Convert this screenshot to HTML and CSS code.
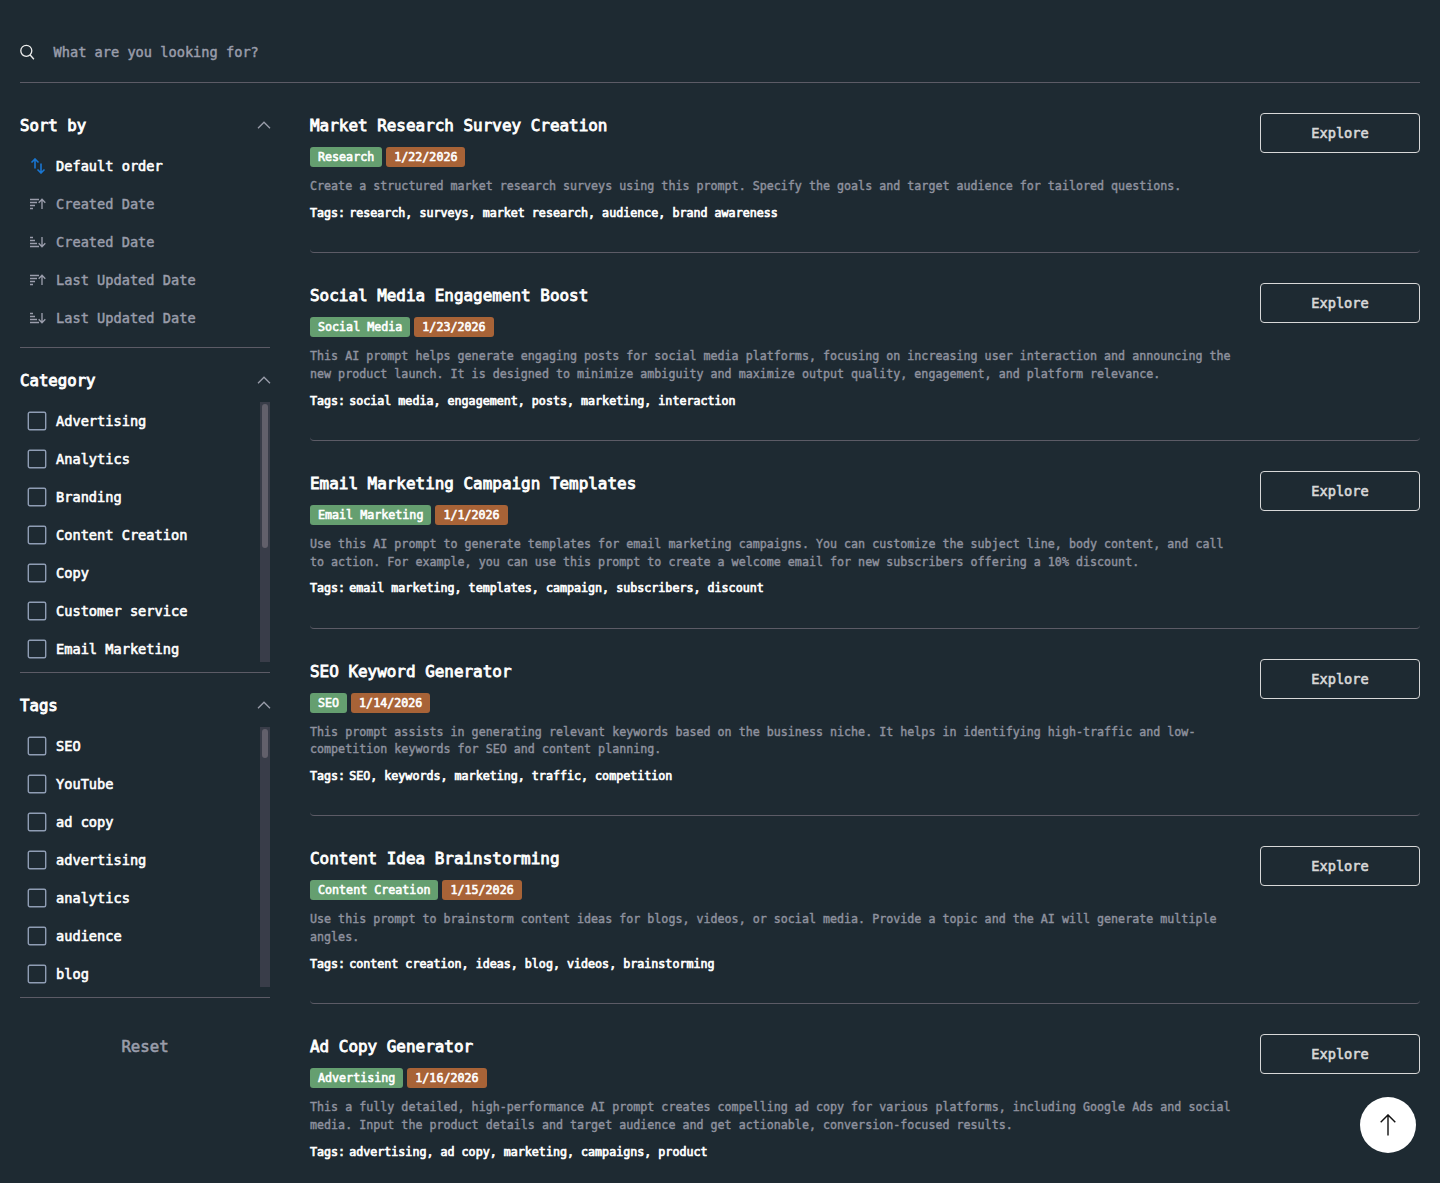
FILE: index.html
```html
<!DOCTYPE html>
<html lang="en">
<head>
<meta charset="utf-8">
<title>Prompts</title>
<link rel="stylesheet" href="styles.css">
</head>
<body>
<svg class="defs" width="0" height="0">
  <symbol id="chev" viewBox="0 0 14 8"><path d="M1 7.2 7 1.2l6 6"/></symbol>
  <symbol id="asc" viewBox="0 0 18 12"><path d="M.5 1.5h9M.5 4.500h7M.5 7.500h5M.5 10.500h3M12.500 11V1.300M9.200 4.700l3.300-3.500 3.300 3.500"/></symbol>
  <symbol id="desc" viewBox="0 0 18 12"><path d="M.5 1.500h3M.5 4.500h5M.5 7.500h7M.5 10.500h9M12.500 1v9.700M9.200 7.300l3.300 3.500 3.300-3.500"/></symbol>
</svg>
<header class="search">
  <svg class="search-icon" viewBox="0 0 16 16"><circle cx="6.300" cy="6.800" r="5.500"/><path d="m10.200 11 3.700 4.200"/></svg>
  <span class="placeholder">What are you looking for?</span>
</header>
<div class="layout">
  <aside class="sidebar">
    <section class="group first">
      <h2 class="head">Sort by<svg class="chev"><use href="#chev"/></svg></h2>
      <ul class="list">
        <li class="row active"><svg class="order" viewBox="0 0 16 16"><path d="M4.500 10.500V1.300M1 4.500l3.500-3.500L8 4.500M10.500 5.500v9M7 11.500l3.500 3.500L14 11.500"/></svg>Default order</li>
        <li class="row muted"><svg class="sort"><use href="#asc"/></svg>Created Date</li>
        <li class="row muted"><svg class="sort"><use href="#desc"/></svg>Created Date</li>
        <li class="row muted"><svg class="sort"><use href="#asc"/></svg>Last Updated Date</li>
        <li class="row muted"><svg class="sort"><use href="#desc"/></svg>Last Updated Date</li>
      </ul>
    </section>
    <section class="group">
      <h2 class="head">Category<svg class="chev"><use href="#chev"/></svg></h2>
      <div class="scroller">
        <ul class="list">
          <li class="row"><svg class="box" viewBox="0 0 20 20"><rect x="1.300" y="1.300" width="17.400" height="17.400" rx="1.500"/></svg>Advertising</li>
          <li class="row"><svg class="box" viewBox="0 0 20 20"><rect x="1.300" y="1.300" width="17.400" height="17.400" rx="1.500"/></svg>Analytics</li>
          <li class="row"><svg class="box" viewBox="0 0 20 20"><rect x="1.300" y="1.300" width="17.400" height="17.400" rx="1.500"/></svg>Branding</li>
          <li class="row"><svg class="box" viewBox="0 0 20 20"><rect x="1.300" y="1.300" width="17.400" height="17.400" rx="1.500"/></svg>Content Creation</li>
          <li class="row"><svg class="box" viewBox="0 0 20 20"><rect x="1.300" y="1.300" width="17.400" height="17.400" rx="1.500"/></svg>Copy</li>
          <li class="row"><svg class="box" viewBox="0 0 20 20"><rect x="1.300" y="1.300" width="17.400" height="17.400" rx="1.500"/></svg>Customer service</li>
          <li class="row"><svg class="box" viewBox="0 0 20 20"><rect x="1.300" y="1.300" width="17.400" height="17.400" rx="1.500"/></svg>Email Marketing</li>
        </ul>
        <div class="track"><div class="thumb long"></div></div>
      </div>
    </section>
    <section class="group">
      <h2 class="head">Tags<svg class="chev"><use href="#chev"/></svg></h2>
      <div class="scroller">
        <ul class="list">
          <li class="row"><svg class="box" viewBox="0 0 20 20"><rect x="1.300" y="1.300" width="17.400" height="17.400" rx="1.500"/></svg>SEO</li>
          <li class="row"><svg class="box" viewBox="0 0 20 20"><rect x="1.300" y="1.300" width="17.400" height="17.400" rx="1.500"/></svg>YouTube</li>
          <li class="row"><svg class="box" viewBox="0 0 20 20"><rect x="1.300" y="1.300" width="17.400" height="17.400" rx="1.500"/></svg>ad copy</li>
          <li class="row"><svg class="box" viewBox="0 0 20 20"><rect x="1.300" y="1.300" width="17.400" height="17.400" rx="1.500"/></svg>advertising</li>
          <li class="row"><svg class="box" viewBox="0 0 20 20"><rect x="1.300" y="1.300" width="17.400" height="17.400" rx="1.500"/></svg>analytics</li>
          <li class="row"><svg class="box" viewBox="0 0 20 20"><rect x="1.300" y="1.300" width="17.400" height="17.400" rx="1.500"/></svg>audience</li>
          <li class="row"><svg class="box" viewBox="0 0 20 20"><rect x="1.300" y="1.300" width="17.400" height="17.400" rx="1.500"/></svg>blog</li>
        </ul>
        <div class="track"><div class="thumb short"></div></div>
      </div>
    </section>
    <div class="reset">Reset</div>
  </aside>
  <main class="results">
    <article class="item">
      <div class="info">
        <h3 class="title">Market Research Survey Creation</h3>
        <div class="chips"><span class="chip">Research</span><span class="chip date">1/22/2026</span></div>
        <p class="text">Create a structured market research surveys using this prompt. Specify the goals and target audience for tailored questions.</p>
        <p class="tags"><span class="label">Tags:</span>research, surveys, market research, audience, brand awareness</p>
      </div>
      <a class="explore">Explore</a>
    </article>
    <article class="item">
      <div class="info">
        <h3 class="title">Social Media Engagement Boost</h3>
        <div class="chips"><span class="chip">Social Media</span><span class="chip date">1/23/2026</span></div>
        <p class="text">This AI prompt helps generate engaging posts for social media platforms, focusing on increasing user interaction and announcing the<br>new product launch. It is designed to minimize ambiguity and maximize output quality, engagement, and platform relevance.</p>
        <p class="tags"><span class="label">Tags:</span>social media, engagement, posts, marketing, interaction</p>
      </div>
      <a class="explore">Explore</a>
    </article>
    <article class="item">
      <div class="info">
        <h3 class="title">Email Marketing Campaign Templates</h3>
        <div class="chips"><span class="chip">Email Marketing</span><span class="chip date">1/1/2026</span></div>
        <p class="text">Use this AI prompt to generate templates for email marketing campaigns. You can customize the subject line, body content, and call<br>to action. For example, you can use this prompt to create a welcome email for new subscribers offering a 10% discount.</p>
        <p class="tags"><span class="label">Tags:</span>email marketing, templates, campaign, subscribers, discount</p>
      </div>
      <a class="explore">Explore</a>
    </article>
    <article class="item">
      <div class="info">
        <h3 class="title">SEO Keyword Generator</h3>
        <div class="chips"><span class="chip">SEO</span><span class="chip date">1/14/2026</span></div>
        <p class="text">This prompt assists in generating relevant keywords based on the business niche. It helps in identifying high-traffic and low-<br>competition keywords for SEO and content planning.</p>
        <p class="tags"><span class="label">Tags:</span>SEO, keywords, marketing, traffic, competition</p>
      </div>
      <a class="explore">Explore</a>
    </article>
    <article class="item">
      <div class="info">
        <h3 class="title">Content Idea Brainstorming</h3>
        <div class="chips"><span class="chip">Content Creation</span><span class="chip date">1/15/2026</span></div>
        <p class="text">Use this prompt to brainstorm content ideas for blogs, videos, or social media. Provide a topic and the AI will generate multiple<br>angles.</p>
        <p class="tags"><span class="label">Tags:</span>content creation, ideas, blog, videos, brainstorming</p>
      </div>
      <a class="explore">Explore</a>
    </article>
    <article class="item">
      <div class="info">
        <h3 class="title">Ad Copy Generator</h3>
        <div class="chips"><span class="chip">Advertising</span><span class="chip date">1/16/2026</span></div>
        <p class="text">This a fully detailed, high-performance AI prompt creates compelling ad copy for various platforms, including Google Ads and social<br>media. Input the product details and target audience and get actionable, conversion-focused results.</p>
        <p class="tags"><span class="label">Tags:</span>advertising, ad copy, marketing, campaigns, product</p>
      </div>
      <a class="explore">Explore</a>
    </article>
  </main>
</div>
<button class="top" aria-label="Back to top"><svg class="arrow" viewBox="0 0 16 22"><path d="M8 21.500V1M.7 8.200 8 .9l7.300 7.300"/></svg></button>
</body>
</html>
```
FILE: styles.css
```css
* { box-sizing: border-box; margin: 0; padding: 0; }
body {
  height: 1183px;
  overflow: hidden;
  padding: 20px 20px 0;
  background: #1e2a32;
  color: #fff;
  font-family: "DejaVu Sans Mono", monospace;
  font-size: 13.65px;
  -webkit-text-stroke: 0.6px currentColor;
}
svg { fill: none; stroke: currentColor; flex: none; display: block; }
.defs { position: absolute; }
ul { list-style: none; }
.search {
  height: 63px;
  padding-top: 1px;
  display: flex;
  align-items: center;
  border-bottom: 1px solid #5c5b66;
}
.search-icon { width: 16px; height: 16px; stroke-width: 1.3; margin-right: 17.5px; color: #eee; }
.placeholder { color: #9a9dab; -webkit-text-stroke-width: 0.45px; }
.layout { display: flex; gap: 40px; }
.sidebar { width: 250px; flex: none; }
.group { padding: 20px 0 10px; border-bottom: 1px solid #5c5b66; }
.group.first { padding-top: 30px; }
.head {
  display: flex;
  align-items: center;
  justify-content: space-between;
  height: 24px;
  margin-bottom: 10px;
  font-size: 15.7px;
  font-weight: 400;
  -webkit-text-stroke-width: 0.9px;
}
.chev { width: 14px; height: 8px; margin-right: -1px; color: #9a9dab; stroke-width: 1.3; }
.scroller { display: flex; height: 260px; overflow: hidden; }
.scroller .list { flex: 1; }
.row { display: flex; align-items: center; height: 38px; padding-left: 7px; }
.box { width: 20px; height: 20px; margin-right: 9px; stroke-width: 1.4; color: #8f9db4; }
.muted { color: #9a9dab; -webkit-text-stroke-width: 0.45px; }
.order { width: 16px; height: 16px; margin: 0 9px 0 4px; stroke-width: 1.6; color: #1976d2; }
.sort { width: 18px; height: 12px; margin: 0 8px 0 3px; stroke-width: 1.35; }
.row .order, .row .sort { transform: translateX(-0.5px); }
.track { width: 10px; padding: 2px; background: #393d49; }
.thumb { border-radius: 3px; background: #62606b; }
.long { height: 144px; }
.short { height: 29px; }
.reset { margin-top: 37px; line-height: 24px; text-align: center; font-size: 15.7px; color: #9a9dab; }
.results { flex: 1; min-width: 0; }
.item {
  display: flex;
  justify-content: space-between;
  padding: 30px 0 30.1px;
  border-bottom: 1px solid #5c5b66;
  border-radius: 4px;
}
.title {
  padding-top: 1px;
  height: 24px;
  font-size: 15.95px;
  font-weight: 400;
  line-height: 24px;
  -webkit-text-stroke-width: 0.85px;
}
.chips { display: flex; gap: 4px; margin: 10px 0; }
.chip {
  height: 20px;
  padding: 0 8px;
  border-radius: 3px;
  background: #659f70;
  font-size: 11.68px;
  line-height: 20px;
  -webkit-text-stroke-width: 0.6px;
}
.date { background: #a86337; }
.text {
  padding-top: 1px;
  color: #8f929f;
  font-size: 11.68px;
  line-height: 17.85px;
  white-space: nowrap;
  -webkit-text-stroke-width: 0.4px;
}
.tags { margin-top: 8px; font-size: 11.68px; line-height: 18px; -webkit-text-stroke-width: 0.7px; }
.label { margin-right: 4px; }
.explore {
  width: 160px;
  height: 40px;
  flex: none;
  display: flex;
  align-items: center;
  justify-content: center;
  border: 1.4px solid #d8d8d8;
  border-radius: 4px;
  color: #d8d8d8;
}
.top {
  position: fixed;
  right: 24px;
  bottom: 30px;
  width: 56px;
  height: 56px;
  display: flex;
  align-items: center;
  justify-content: center;
  border: 0;
  border-radius: 50%;
  background: #fff;
  color: #111;
}
.arrow { width: 16px; height: 22px; stroke-width: 1.4; }
```
